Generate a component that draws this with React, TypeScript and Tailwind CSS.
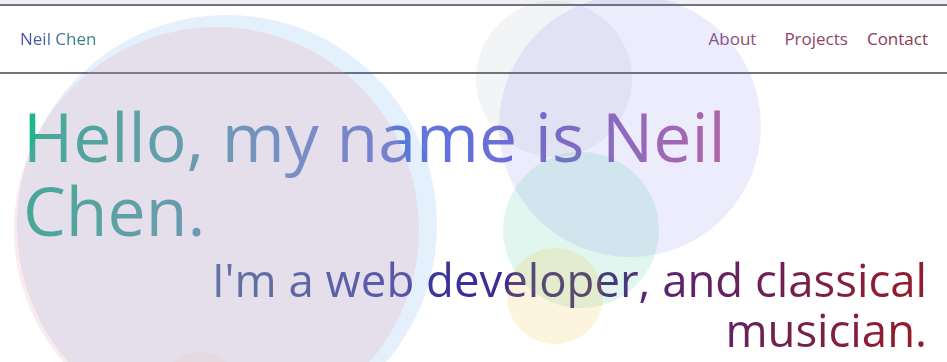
import React from "react";

const circles = [
  "left-[17px] top-[15px] h-[420px] w-[420px] bg-[rgba(0,110,240,0.1)]",
  "left-[14px] top-[27px] h-[405px] w-[405px] bg-[rgba(230,156,164,0.2)]",
  "left-[160px] top-[352px] h-[80px] w-[80px] bg-[rgba(249,115,22,0.05)]",
  "left-[476px] top-[1px] h-[156px] w-[156px] bg-[rgba(107,114,128,0.08)]",
  "left-[499px] top-[-5px] h-[262px] w-[262px] bg-[rgba(99,102,241,0.12)]",
  "left-[503px] top-[152px] h-[156px] w-[156px] bg-[rgba(16,185,129,0.12)]",
  "left-[507px] top-[248px] h-[96px] w-[96px] bg-[rgba(234,179,8,0.14)]",
];

export default function App() {
  return (
    <div className="relative h-[362px] w-full overflow-hidden bg-white font-['Open_Sans',sans-serif]">
      <div className="h-[4px] bg-[#f0eff3]" />
      <nav className="flex h-[70px] items-center justify-between border-y-2 border-[#71747d] pl-[20px] pr-[19px] text-[17px]">
        <span className="bg-[linear-gradient(90deg,#5050b0,#2f8a7c)] bg-clip-text text-transparent">Neil Chen</span>
        <div className="flex items-center">
          <span className="mr-[28px] text-[#8c5080]">About</span>
          <span className="mr-[19px] text-[#924468]">Projects</span>
          <span className="text-[#8c3a56]">Contact</span>
        </div>
      </nav>
      <main className="pt-[25px]">
        <h1 className="w-[780px] bg-[linear-gradient(100deg,#14b886,#4aa8a0_20%,#6b8fcb_38%,#6070e0_58%,#d3648b)] bg-clip-text pl-[23px] text-[68px] font-normal leading-[74px] text-transparent">
          Hello, my name is Neil Chen.
        </h1>
        <p className="mt-[7px] bg-[linear-gradient(90deg,#4a6a98,#4a6a98_23%,#4048a3_39%,#3a2e9a_49%,#5f2364_75%,#911c2d_95%)] bg-clip-text px-[20px] text-right text-[45.5px] leading-[50px] text-transparent">
          I'm a web developer, and classical musician.
        </p>
      </main>

      {circles.map((c) => (
        <div key={c} className={`pointer-events-none absolute rounded-full ${c}`} />
      ))}
    </div>
  );
}
